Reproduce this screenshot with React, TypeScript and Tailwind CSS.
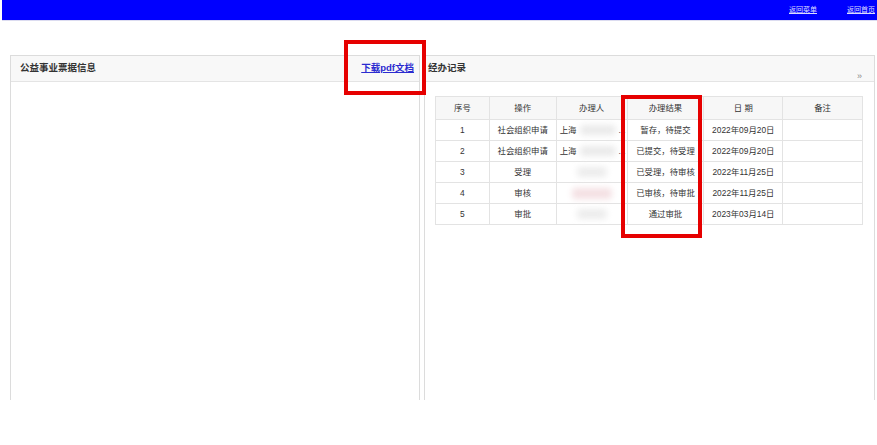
const rows = [
  { no: '1', op: '社会组织申请', who: 'sh', result: '暂存，待提交', date: '2022年09月20日' },
  { no: '2', op: '社会组织申请', who: 'sh', result: '已提交，待受理', date: '2022年09月20日' },
  { no: '3', op: '受理', who: 'a', result: '已受理，待审核', date: '2022年11月25日' },
  { no: '4', op: '审核', who: 'b', result: '已审核，待审批', date: '2022年11月25日' },
  { no: '5', op: '审批', who: 'a', result: '通过审批', date: '2023年03月14日' },
]

function Blurred({ who }: { who: string }) {
  if (who === 'sh') {
    return (
      <div className="flex items-center pl-[3px] w-full">
        <span>上海</span>
        <span className="inline-block ml-[4px] w-[36px] h-[10px] bg-[#eaeaea] blur-[3px] rounded"></span>
        <span className="ml-auto pr-[1px]">...</span>
      </div>
    )
  }
  return (
    <div className="flex justify-center">
      <span
        className={
          who === 'b'
            ? 'inline-block w-[40px] h-[11px] bg-[#f4e0e3] blur-[3px] rounded'
            : 'inline-block w-[30px] h-[10px] bg-[#ececec] blur-[3px] rounded'
        }
      ></span>
    </div>
  )
}

export default function App() {
  const th = 'border border-[#e3e3e3] font-normal h-[23px]'
  const td = 'border border-[#e3e3e3] h-[21px] text-center'

  return (
    <div className="relative w-[877px] h-[445px] bg-white overflow-hidden font-['Liberation_Sans','Noto_Sans_CJK_SC',sans-serif] text-[#333]">
      <div className="ml-[2px] h-[21px] bg-[#0000ff] border-b border-[#dcdcf0] flex items-center justify-end gap-[30px] pr-[2px] text-[7px] text-[#dcdcff]">
        <a className="underline">返回菜单</a>
        <a className="underline">返回首页</a>
      </div>

      <div className="flex gap-[4px] pl-[10px] pt-[34px]">
        <div className="w-[410px] h-[345px] border-x border-t border-[#dcdcdc] flex flex-col">
          <div className="h-[26px] bg-[#f8f8f8] border-b border-[#e4e4e4] flex items-center justify-between pl-[9px] pr-[5px]">
            <span className="text-[9.5px] font-bold text-[#333]">公益事业票据信息</span>
            <a className="text-[9.5px] font-bold text-[#2b2bd0] underline">下载pdf文档</a>
          </div>
        </div>

        <div className="w-[451px] h-[345px] border-x border-t border-[#dcdcdc] flex flex-col">
          <div className="h-[26px] bg-[#f8f8f8] border-b border-[#e4e4e4] flex items-center justify-between pl-[3px] pr-[12px]">
            <span className="text-[9.5px] font-bold text-[#333]">经办记录</span>
            <span className="text-[9px] text-[#888] mt-[16px]">»</span>
          </div>
          <div className="pl-[10px] pt-[14px]">
            <table className="w-[428px] border-collapse text-[8.4px] text-[#333]">
              <thead>
                <tr className="bg-[#f7f7f7]">
                  <th className={`${th} w-[54px]`}>序号</th>
                  <th className={`${th} w-[67px]`}>操作</th>
                  <th className={`${th} w-[71px]`}>办理人</th>
                  <th className={`${th} w-[77px]`}>办理结果</th>
                  <th className={`${th} w-[79px]`}>日 期</th>
                  <th className={`${th} w-[80px]`}>备注</th>
                </tr>
              </thead>
              <tbody>
                {rows.map((r) => (
                  <tr key={r.no}>
                    <td className={td}>{r.no}</td>
                    <td className={td}>{r.op}</td>
                    <td className={td}>
                      <Blurred who={r.who} />
                    </td>
                    <td className={td}>{r.result}</td>
                    <td className={td}>{r.date}</td>
                    <td className={td}></td>
                  </tr>
                ))}
              </tbody>
            </table>
          </div>
        </div>
      </div>

      <div className="absolute left-[344px] top-[40px] w-[82px] h-[55px] border-[4px] border-[#e60000]"></div>
      <div className="absolute left-[621px] top-[95px] w-[81px] h-[143px] border-[4px] border-[#e60000]"></div>
    </div>
  )
}
